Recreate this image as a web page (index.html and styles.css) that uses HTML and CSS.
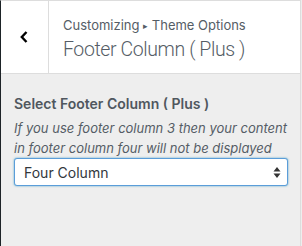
FILE: index.html
```html
<!DOCTYPE html>
<html lang="en">
<head>
  <meta charset="UTF-8">
  <meta name="viewport" content="width=device-width, initial-scale=1.0">
  <title>Footer Column</title>
  <link rel="stylesheet" href="styles.css">
</head>
<body>

  <div class="panel">
    <!-- header -->
    <div class="panel-head">
      <button class="back" aria-label="Back">
        <svg width="8" height="12" viewBox="0 0 8 12"><path d="M6.5 1 L1.8 6 L6.5 11" fill="none" stroke="#000" stroke-width="2.4"/></svg>
      </button>
      <div class="title-box">
        <div class="crumbs">Customizing <span class="sep">&#9656;</span> Theme Options</div>
        <div class="title">Footer Column ( Plus )</div>
      </div>
    </div>

    <!-- control -->
    <div class="control">
      <div class="label">Select Footer Column ( Plus )</div>
      <div class="desc">If you use footer column 3 then your content in footer column four will not be displayed</div>
      <div class="select">
        <span>Four Column</span>
        <svg width="8" height="13" viewBox="0 0 8 13"><path d="M4 1 L7.5 5.5 H0.5 Z M4 12 L7.5 7.5 H0.5 Z" fill="#333"/></svg>
      </div>
    </div>
  </div>

</body>
</html>
```

FILE: styles.css
```css
* {
  box-sizing: border-box;
}

body {
  margin: 0;
  background-color: #eee;
  font-family: 'Inter', 'Liberation Sans', sans-serif;
}

.panel {
  width: 301px;
  height: 246px;
  border-left: 1px solid #1d2327;
  border-right: 1px solid #ddd;
  border-top: 1px solid #ddd;
  background-color: #eee;
}

.panel-head {
  display: flex;
  height: 73px;
  background-color: #fff;
  border-bottom: 1px solid #ddd;
}

.back {
  width: 48px;
  padding: 0 1px 0 0;
  border: none;
  border-right: 1px solid #ddd;
  background: #fff;
  display: flex;
  align-items: center;
  justify-content: center;
}

.title-box {
  padding: 14px 0 0 14px;
}

.crumbs {
  font-size: 13px;
  color: #555d66;
  line-height: 20px;
}

.crumbs .sep {
  font-size: 9px;
  vertical-align: 1px;
}

.title {
  font-family: 'Roboto', sans-serif;
  font-size: 19.5px;
  font-weight: 300;
  color: #555d66;
  line-height: 28px;
  letter-spacing: -0.4px;
}

.control {
  padding: 20px 12px 0 13px;
}

.label {
  font-size: 14px;
  font-weight: 600;
  color: #50575e;
  line-height: 20px;
}

.desc {
  margin-top: 4px;
  font-size: 13px;
  font-style: italic;
  color: #555d66;
  line-height: 20px;
}

.select {
  margin-top: 0;
  height: 28px;
  display: flex;
  align-items: center;
  justify-content: space-between;
  padding: 0 6px 0 9px;
  background-color: #fff;
  border: 1px solid #5b9dd9;
  border-radius: 3px;
  box-shadow: 0 0 2px rgba(30, 140, 190, 0.8);
  font-size: 14px;
  color: #32373c;
}
```
